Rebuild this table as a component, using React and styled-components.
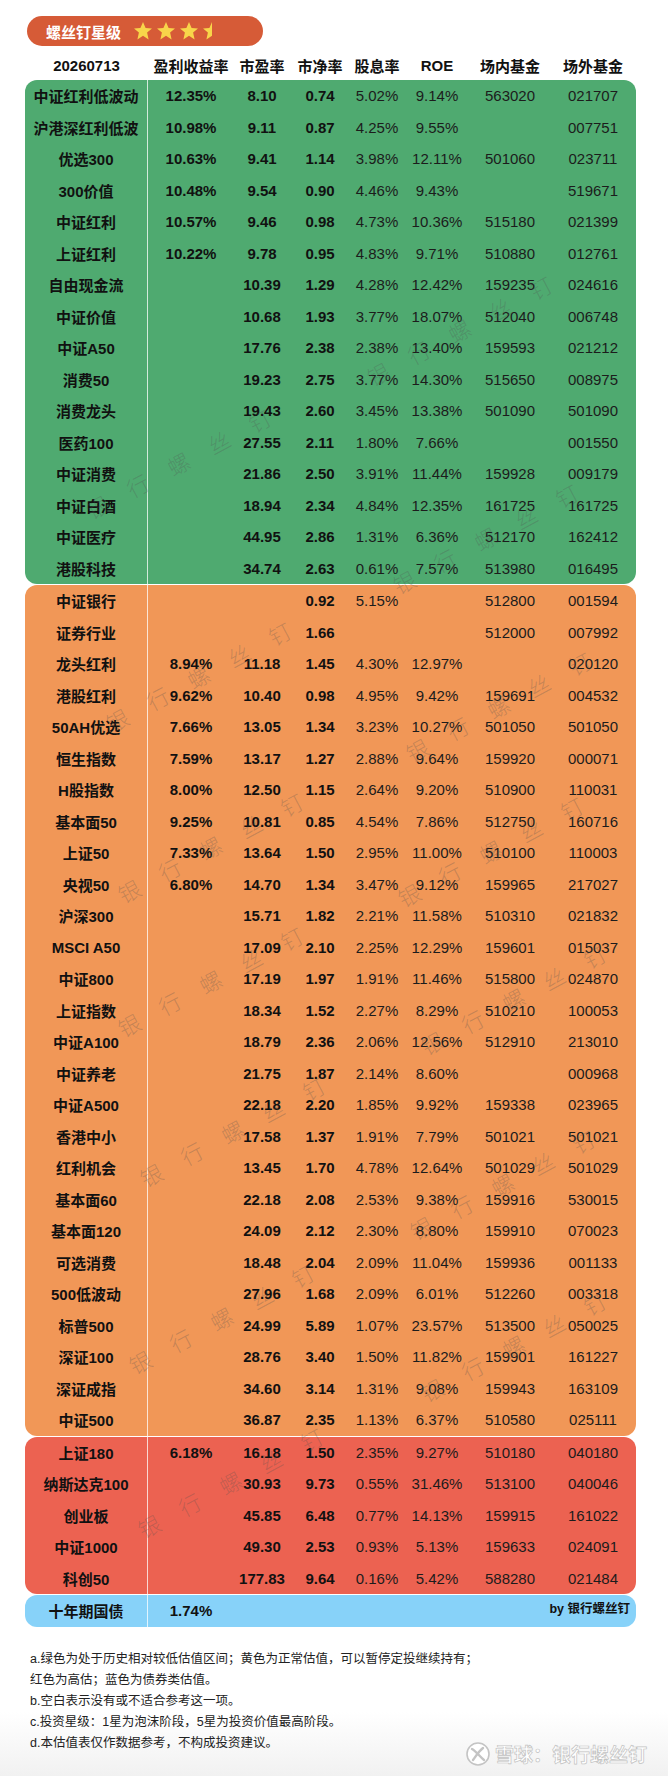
import React from "react";
import styled, { createGlobalStyle } from "styled-components";

const GlobalStyle = createGlobalStyle`
  body {
    margin: 0;
    background: #ffffff;
    font-family: "Liberation Sans", "Noto Sans CJK SC", sans-serif;
    color: #111;
  }
`;

const green = [
  ["中证红利低波动", "12.35%", "8.10", "0.74", "5.02%", "9.14%", "563020", "021707"],
  ["沪港深红利低波", "10.98%", "9.11", "0.87", "4.25%", "9.55%", "", "007751"],
  ["优选300", "10.63%", "9.41", "1.14", "3.98%", "12.11%", "501060", "023711"],
  ["300价值", "10.48%", "9.54", "0.90", "4.46%", "9.43%", "", "519671"],
  ["中证红利", "10.57%", "9.46", "0.98", "4.73%", "10.36%", "515180", "021399"],
  ["上证红利", "10.22%", "9.78", "0.95", "4.83%", "9.71%", "510880", "012761"],
  ["自由现金流", "", "10.39", "1.29", "4.28%", "12.42%", "159235", "024616"],
  ["中证价值", "", "10.68", "1.93", "3.77%", "18.07%", "512040", "006748"],
  ["中证A50", "", "17.76", "2.38", "2.38%", "13.40%", "159593", "021212"],
  ["消费50", "", "19.23", "2.75", "3.77%", "14.30%", "515650", "008975"],
  ["消费龙头", "", "19.43", "2.60", "3.45%", "13.38%", "501090", "501090"],
  ["医药100", "", "27.55", "2.11", "1.80%", "7.66%", "", "001550"],
  ["中证消费", "", "21.86", "2.50", "3.91%", "11.44%", "159928", "009179"],
  ["中证白酒", "", "18.94", "2.34", "4.84%", "12.35%", "161725", "161725"],
  ["中证医疗", "", "44.95", "2.86", "1.31%", "6.36%", "512170", "162412"],
  ["港股科技", "", "34.74", "2.63", "0.61%", "7.57%", "513980", "016495"],
];

const orange = [
  ["中证银行", "", "", "0.92", "5.15%", "", "512800", "001594"],
  ["证券行业", "", "", "1.66", "", "", "512000", "007992"],
  ["龙头红利", "8.94%", "11.18", "1.45", "4.30%", "12.97%", "", "020120"],
  ["港股红利", "9.62%", "10.40", "0.98", "4.95%", "9.42%", "159691", "004532"],
  ["50AH优选", "7.66%", "13.05", "1.34", "3.23%", "10.27%", "501050", "501050"],
  ["恒生指数", "7.59%", "13.17", "1.27", "2.88%", "9.64%", "159920", "000071"],
  ["H股指数", "8.00%", "12.50", "1.15", "2.64%", "9.20%", "510900", "110031"],
  ["基本面50", "9.25%", "10.81", "0.85", "4.54%", "7.86%", "512750", "160716"],
  ["上证50", "7.33%", "13.64", "1.50", "2.95%", "11.00%", "510100", "110003"],
  ["央视50", "6.80%", "14.70", "1.34", "3.47%", "9.12%", "159965", "217027"],
  ["沪深300", "", "15.71", "1.82", "2.21%", "11.58%", "510310", "021832"],
  ["MSCI A50", "", "17.09", "2.10", "2.25%", "12.29%", "159601", "015037"],
  ["中证800", "", "17.19", "1.97", "1.91%", "11.46%", "515800", "024870"],
  ["上证指数", "", "18.34", "1.52", "2.27%", "8.29%", "510210", "100053"],
  ["中证A100", "", "18.79", "2.36", "2.06%", "12.56%", "512910", "213010"],
  ["中证养老", "", "21.75", "1.87", "2.14%", "8.60%", "", "000968"],
  ["中证A500", "", "22.18", "2.20", "1.85%", "9.92%", "159338", "023965"],
  ["香港中小", "", "17.58", "1.37", "1.91%", "7.79%", "501021", "501021"],
  ["红利机会", "", "13.45", "1.70", "4.78%", "12.64%", "501029", "501029"],
  ["基本面60", "", "22.18", "2.08", "2.53%", "9.38%", "159916", "530015"],
  ["基本面120", "", "24.09", "2.12", "2.30%", "8.80%", "159910", "070023"],
  ["可选消费", "", "18.48", "2.04", "2.09%", "11.04%", "159936", "001133"],
  ["500低波动", "", "27.96", "1.68", "2.09%", "6.01%", "512260", "003318"],
  ["标普500", "", "24.99", "5.89", "1.07%", "23.57%", "513500", "050025"],
  ["深证100", "", "28.76", "3.40", "1.50%", "11.82%", "159901", "161227"],
  ["深证成指", "", "34.60", "3.14", "1.31%", "9.08%", "159943", "163109"],
  ["中证500", "", "36.87", "2.35", "1.13%", "6.37%", "510580", "025111"],
];

const red = [
  ["上证180", "6.18%", "16.18", "1.50", "2.35%", "9.27%", "510180", "040180"],
  ["纳斯达克100", "", "30.93", "9.73", "0.55%", "31.46%", "513100", "040046"],
  ["创业板", "", "45.85", "6.48", "0.77%", "14.13%", "159915", "161022"],
  ["中证1000", "", "49.30", "2.53", "0.93%", "5.13%", "159633", "024091"],
  ["科创50", "", "177.83", "9.64", "0.16%", "5.42%", "588280", "021484"],
];

const headers = ["20260713", "盈利收益率", "市盈率", "市净率", "股息率", "ROE", "场内基金", "场外基金"];

// watermark centres, relative to the table's top-left corner
const marks = [
  [434, 250], [153, 383], [460, 458], [173, 596], [473, 626],
  [185, 767], [465, 771], [185, 901], [488, 919], [207, 1051],
  [477, 1104], [196, 1238], [488, 1266], [205, 1402],
];

const notes = [
  "a.绿色为处于历史相对较低估值区间；黄色为正常估值，可以暂停定投继续持有；",
  "红色为高估；蓝色为债券类估值。",
  "b.空白表示没有或不适合参考这一项。",
  "c.投资星级：1星为泡沫阶段，5星为投资价值最高阶段。",
  "d.本估值表仅作数据参考，不构成投资建议。",
];

const COLS = "123px 86px 56px 60px 54px 66px 80px 86px";

function Star({ half }) {
  return (
    <svg width="20" height="20" viewBox="0 0 20 20">
      <defs>
        <clipPath id="halfStar">
          <rect x="0" y="0" width="10" height="20" />
        </clipPath>
      </defs>
      <polygon
        points="10,1 12.6,7 19,7.4 14.1,11.6 15.6,18.4 10,14.8 4.4,18.4 5.9,11.6 1,7.4 7.4,7"
        fill="#f8d54a"
        clipPath={half ? "url(#halfStar)" : undefined}
      />
    </svg>
  );
}

function XueqiuLogo() {
  return (
    <svg width="26" height="26" viewBox="0 0 26 26">
      <circle cx="13" cy="13" r="11" fill="#fff" stroke="#c4c4c4" strokeWidth="1.6" />
      <path d="M7 8 C11 10 15 16 19 19" fill="none" stroke="#c4c4c4" strokeWidth="2.4" strokeLinecap="round" />
      <path d="M18 7 C14 10 11 15 8 19" fill="none" stroke="#c4c4c4" strokeWidth="2.4" strokeLinecap="round" />
    </svg>
  );
}

function DataRow({ row }) {
  return (
    <Row>
      <Label>{row[0]}</Label>
      {row.slice(1).map((v, i) => (
        <Cell key={i} $bold={i < 3}>
          {v}
        </Cell>
      ))}
    </Row>
  );
}

export default function App() {
  return (
    <Page>
      <GlobalStyle />
      <Badge>
        <BadgeTitle>螺丝钉星级</BadgeTitle>
        <Stars>
          <Star />
          <Star />
          <Star />
          <Star half />
        </Stars>
      </Badge>

      <HeaderRow>
        {headers.map((h) => (
          <HeadCell key={h}>{h}</HeadCell>
        ))}
      </HeaderRow>

      <Table>
        <Group $bg="#4faa70">
          {green.map((r) => (
            <DataRow key={r[0]} row={r} />
          ))}
        </Group>
        <Group $bg="#f19757">
          {orange.map((r) => (
            <DataRow key={r[0]} row={r} />
          ))}
        </Group>
        <Group $bg="#ec6251">
          {red.map((r) => (
            <DataRow key={r[0]} row={r} />
          ))}
        </Group>
        <Group $bg="#87d2f9">
          <Row>
            <Label>十年期国债</Label>
            <Cell $bold>1.74%</Cell>
            <Signature>by 银行螺丝钉</Signature>
          </Row>
        </Group>

        {marks.map(([x, y], i) => (
          <Watermark key={i} $x={x} $y={y}>
            银行螺丝钉
          </Watermark>
        ))}
      </Table>

      <Notes>
        {notes.map((n) => (
          <p key={n}>{n}</p>
        ))}
      </Notes>

      <Xueqiu>
        <XueqiuLogo />
        <span>雪球：银行螺丝钉</span>
      </Xueqiu>
    </Page>
  );
}

const Page = styled.div`
  position: relative;
  box-sizing: border-box;
  width: 668px;
  min-height: 1776px;
  padding: 16px 32px 0 25px;
  background: linear-gradient(to bottom, #ffffff 0, #ffffff 1712px, #f1f1f1 1776px);
`;

const Badge = styled.div`
  display: flex;
  align-items: center;
  box-sizing: border-box;
  width: 236px;
  height: 30px;
  margin-left: 2px;
  padding-left: 19px;
  border-radius: 15px;
  background: #d65b37;
`;

const BadgeTitle = styled.span`
  color: #fff;
  font-size: 15px;
  font-weight: 700;
  margin-right: 12px;
`;

const Stars = styled.div`
  display: flex;
  gap: 3px;
`;

const HeaderRow = styled.div`
  display: grid;
  grid-template-columns: ${COLS};
  height: 30px;
  margin-top: 4px;
  align-items: center;
`;

const HeadCell = styled.div`
  text-align: center;
  font-size: 15px;
  font-weight: 700;
  color: #111;
`;

const Table = styled.div`
  position: relative;
  display: flex;
  flex-direction: column;
  gap: 1px;
`;

const Group = styled.div`
  background: ${(p) => p.$bg};
  border-radius: 12px;
  overflow: hidden;
`;

const Row = styled.div`
  display: grid;
  grid-template-columns: ${COLS};
  height: 31.5px;
  align-items: center;
`;

const Label = styled.div`
  display: flex;
  align-items: center;
  justify-content: center;
  height: 100%;
  border-right: 1px solid rgba(255, 255, 255, 0.75);
  font-size: 15px;
  font-weight: 700;
  color: #111;
  white-space: nowrap;
`;

const Cell = styled.div`
  text-align: center;
  font-size: 15px;
  font-weight: ${(p) => (p.$bold ? 700 : 400)};
  color: ${(p) => (p.$bold ? "#111" : "#1c1c1c")};
  white-space: nowrap;
`;

const Signature = styled.div`
  grid-column: 3 / -1;
  text-align: right;
  padding-right: 6px;
  margin-top: -7px;
  font-size: 12.5px;
  font-weight: 700;
  color: #111;
`;

const Watermark = styled.span`
  position: absolute;
  left: ${(p) => p.$x}px;
  top: ${(p) => p.$y}px;
  padding-left: 24px;
  transform: translate(-50%, -50%) rotate(-28deg);
  font-family: "Noto Sans CJK SC", sans-serif;
  font-size: 22px;
  font-weight: 300;
  letter-spacing: 24px;
  color: rgba(80, 80, 80, 0.28);
  white-space: nowrap;
  pointer-events: none;
`;

const Notes = styled.div`
  margin-top: 22px;
  padding-left: 5px;

  p {
    margin: 0;
    font-family: "Liberation Sans", "Noto Sans CJK SC", sans-serif;
    font-size: 12.5px;
    line-height: 21px;
    color: #222;
  }
`;

const Xueqiu = styled.div`
  position: absolute;
  right: 21px;
  bottom: 9px;
  display: flex;
  align-items: center;
  gap: 4px;

  span {
    font-family: "Noto Sans CJK SC", sans-serif;
    font-size: 19px;
    font-weight: 700;
    color: #fff;
    -webkit-text-stroke: 0.7px #c2c2c2;
  }
`;
